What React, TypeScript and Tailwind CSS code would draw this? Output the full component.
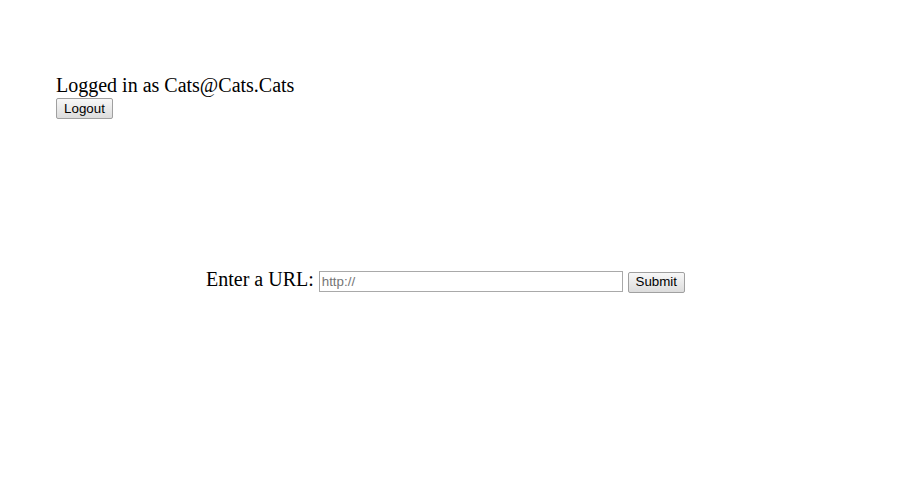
export default function App() {
  return (
    <div className="min-h-screen bg-white text-black">
      <div className="pl-[56px] pt-[73px] font-['Liberation_Serif',serif]">
        <div className="text-[20px] leading-[25px]">Logged in as Cats@Cats.Cats</div>
        <button className="block h-[21px] w-[57px] rounded-[2px] border border-[#a0a0a0] bg-gradient-to-b from-[#f8f8f8] to-[#dcdcdc] font-['Liberation_Sans',sans-serif] text-[13.33px] leading-[18px] text-black">
          Logout
        </button>
      </div>
      <div className="ml-[206px] mt-[149px] flex items-baseline gap-[5px] font-['Liberation_Serif',serif]">
        <label className="text-[20px] leading-[23px]">Enter a URL:</label>
        <input
          type="text"
          placeholder="http://"
          className="h-[21px] w-[304px] border border-[#a9a9a9] px-[2px] font-['Liberation_Sans',sans-serif] text-[13.33px] text-black placeholder:text-[#757575]"
        />
        <button className="h-[21px] w-[57px] rounded-[2px] border border-[#a0a0a0] bg-gradient-to-b from-[#f8f8f8] to-[#dcdcdc] font-['Liberation_Sans',sans-serif] text-[13.33px] leading-[18px] text-black">
          Submit
        </button>
      </div>
    </div>
  );
}
